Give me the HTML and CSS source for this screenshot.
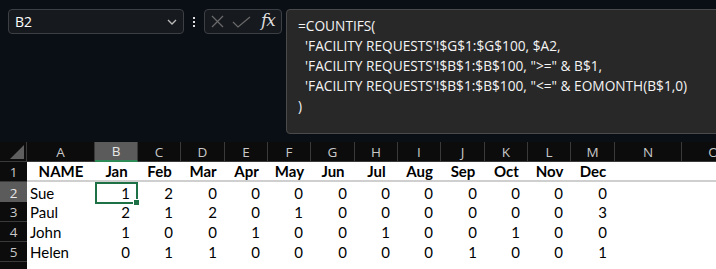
FILE: index.html
```html
<!DOCTYPE html>
<html lang="en">
<head>
    <meta charset="UTF-8">
    <title>COUNTIFS by month</title>
    <link rel="stylesheet" href="styles.css">
</head>
<body>
    <div class="toolbar">
        <div class="namebox">
            <span>B2</span>
            <svg class="chevron" width="10" height="6" viewBox="0 0 10 6"><path d="M1 1 L5 5 L9 1" fill="none" stroke="#bbb" stroke-width="1.3"/></svg>
        </div>
        <div class="dots"><i></i><i></i><i></i></div>
        <div class="fxbox">
            <svg width="13" height="13" viewBox="0 0 13 13"><path d="M1 1 L12 12 M12 1 L1 12" stroke="#6a6a6a" stroke-width="1.2" fill="none"/></svg>
            <svg width="19" height="12" viewBox="0 0 19 12"><path d="M1 6 L6 11 L18 1" stroke="#6a6a6a" stroke-width="1.2" fill="none"/></svg>
            <span class="fx">fx</span>
        </div>
        <div class="formula">=COUNTIFS(
  'FACILITY REQUESTS'!$G$1:$G$100, $A2,
  'FACILITY REQUESTS'!$B$1:$B$100, "&gt;=" &amp; B$1,
  'FACILITY REQUESTS'!$B$1:$B$100, "&lt;=" &amp; EOMONTH(B$1,0)
)</div>
    </div>

    <div class="sheet">
        <div class="row colheads">
            <div class="corner"><span></span></div>
            <div>A</div><div class="sel">B</div><div>C</div><div>D</div><div>E</div><div>F</div><div>G</div>
            <div>H</div><div>I</div><div>J</div><div>K</div><div>L</div><div>M</div><div>N</div><div>O</div>
        </div>
        <div class="row titles">
            <div class="rh">1</div>
            <div class="c">NAME</div><div class="c">Jan</div><div class="c">Feb</div><div class="c">Mar</div>
            <div class="c">Apr</div><div class="c">May</div><div class="c">Jun</div><div class="c">Jul</div>
            <div class="c">Aug</div><div class="c">Sep</div><div class="c">Oct</div><div class="c">Nov</div>
            <div class="c">Dec</div><div></div><div></div>
        </div>
        <div class="row data">
            <div class="rh sel">2</div><div class="name">Sue</div>
            <div class="n active">1</div><div class="n">2</div><div class="n">0</div><div class="n">0</div><div class="n">0</div><div class="n">0</div>
            <div class="n">0</div><div class="n">0</div><div class="n">0</div><div class="n">0</div><div class="n">0</div><div class="n">0</div><div></div><div></div>
        </div>
        <div class="row data">
            <div class="rh">3</div><div class="name">Paul</div>
            <div class="n">2</div><div class="n">1</div><div class="n">2</div><div class="n">0</div><div class="n">1</div><div class="n">0</div>
            <div class="n">0</div><div class="n">0</div><div class="n">0</div><div class="n">0</div><div class="n">0</div><div class="n">3</div><div></div><div></div>
        </div>
        <div class="row data">
            <div class="rh">4</div><div class="name">John</div>
            <div class="n">1</div><div class="n">0</div><div class="n">0</div><div class="n">1</div><div class="n">0</div><div class="n">0</div>
            <div class="n">1</div><div class="n">0</div><div class="n">0</div><div class="n">1</div><div class="n">0</div><div class="n">0</div><div></div><div></div>
        </div>
        <div class="row data">
            <div class="rh">5</div><div class="name">Helen</div>
            <div class="n">0</div><div class="n">1</div><div class="n">1</div><div class="n">0</div><div class="n">0</div><div class="n">0</div>
            <div class="n">0</div><div class="n">0</div><div class="n">1</div><div class="n">0</div><div class="n">0</div><div class="n">1</div><div></div><div></div>
        </div>
        <div class="row data">
            <div class="rh"></div><div></div>
        </div>
    </div>
</body>
</html>
```

FILE: styles.css
```css
* {
    margin: 0;
    padding: 0;
    box-sizing: border-box;
}

body {
    width: 716px;
    height: 269px;
    overflow: hidden;
    background-color: #0a0e15;
    font-family: "Open Sans", sans-serif;
}

/* formula bar */
.toolbar {
    display: flex;
    align-items: flex-start;
    height: 142px;
    padding: 9px 0 0 8px;
}

.namebox {
    width: 176px;
    height: 25px;
    display: flex;
    align-items: center;
    justify-content: space-between;
    padding: 0 6px 0 6px;
    border: 1px solid #3c3f44;
    border-radius: 4px;
    background-color: #16191e;
    color: #fff;
    font-size: 14px;
}

.chevron {
    margin-top: 1px;
}

.dots {
    width: 20px;
    height: 25px;
    display: flex;
    flex-direction: column;
    align-items: center;
    justify-content: center;
    gap: 2px;
}

.dots i {
    width: 2px;
    height: 2px;
    background-color: #ddd;
}

.fxbox {
    width: 78px;
    height: 25px;
    display: flex;
    align-items: center;
    gap: 8px;
    padding-left: 6px;
    border: 1px solid #3c3f44;
    border-radius: 4px;
    background-color: #16191e;
}

.fx {
    font-family: "DejaVu Serif", serif;
    font-style: italic;
    font-size: 17px;
    color: #ddd;
    margin-left: 2px;
    margin-top: -3px;
    letter-spacing: -1px;
}

.formula {
    flex: 1;
    height: 125px;
    margin-left: 4px;
    margin-right: -6px;
    padding: 6px 11px;
    border: 1px solid #4a4a4a;
    border-radius: 4px;
    background-color: #282828;
    color: #f4f4f4;
    font-size: 13.7px;
    line-height: 20px;
    white-space: pre;
}

/* sheet */
.sheet {
    width: 746px;
}

.row {
    display: grid;
    grid-template-columns: 27px 68px 43px 43px 44px 43px 43px 44px 43px 43px 44px 43px 43px 44px 67px 1fr;
    height: 20px;
}

.colheads {
    background-color: #0c0c0c;
    color: #c8c8c8;
    font-family: "Open Sans", sans-serif;
    font-size: 13.5px;
    border-bottom: 1px solid #3a3a3a;
}

.colheads div {
    display: flex;
    align-items: center;
    justify-content: center;
    border-right: 1px solid #3a3a3a;
}

.colheads .sel {
    background-color: #5b5b5b;
    color: #e8e8e8;
    border-bottom: 2px solid #2e8b57;
}

.corner {
    position: relative;
}

.corner span {
    position: absolute;
    right: 2px;
    bottom: 3px;
    width: 0;
    height: 0;
    border-left: 14px solid transparent;
    border-bottom: 14px solid #5e5e5e;
}

.titles,
.data {
    background-color: #fff;
    color: #000;
    font-family: Lato, sans-serif;
    font-size: 15px;
}

.titles {
    border-bottom: 2px solid #cfcfcf;
}

.titles .c {
    display: flex;
    align-items: center;
    justify-content: center;
    font-weight: bold;
}

.rh {
    display: flex;
    align-items: center;
    justify-content: center;
    background-color: #0c0c0c;
    color: #c8c8c8;
    font-family: "Open Sans", sans-serif;
    font-size: 13.5px;
    border-bottom: 1px solid #3a3a3a;
}

.titles .rh {
    margin-bottom: -2px;
}

.rh.sel {
    background-color: #5b5b5b;
    color: #e8e8e8;
}

.name {
    display: flex;
    align-items: center;
    padding-left: 3px;
}

.n {
    display: flex;
    align-items: center;
    justify-content: flex-end;
    padding-right: 8px;
}

.n.active {
    position: relative;
    border: 2px solid #1e7145;
    padding-right: 6px;
}

.n.active::after {
    content: "";
    position: absolute;
    right: -4px;
    bottom: -4px;
    width: 5px;
    height: 5px;
    background-color: #1e7145;
    border: 1px solid #fff;
}
```
